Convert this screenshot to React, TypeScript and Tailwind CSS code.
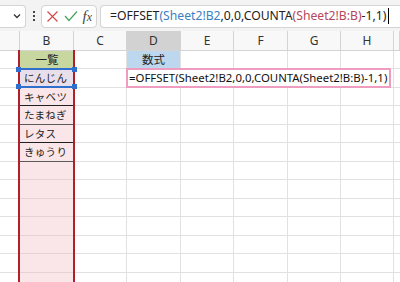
import React from 'react';

const jp = { fontFamily: '"Noto Sans CJK JP", "Noto Sans", sans-serif' };

const headers = [
  { k: '', w: 'w-[20px]' },
  { k: 'B', w: 'w-[54px]' },
  { k: 'C', w: 'w-[53px]' },
  { k: 'D', w: 'w-[54px]' },
  { k: 'E', w: 'w-[53px]' },
  { k: 'F', w: 'w-[54px]' },
  { k: 'G', w: 'w-[53px]' },
  { k: 'H', w: 'w-[53px]' },
  { k: '', w: 'flex-1' },
];

const items = ['', '一覧', 'にんじん', 'キャベツ', 'たまねぎ', 'レタス', 'きゅうり'];

const App: React.FC = () => {
  const rows = Array.from({ length: 13 }, (_, i) => i);

  return (
    <div className="relative w-[400px] h-[282px] overflow-hidden bg-white" style={jp}>
      {/* formula bar */}
      <div className="h-[31px] bg-[#f3f3f3] flex items-center pt-[1px]">
        <div className="w-[26px] h-[23px] bg-white border border-l-0 border-[#d4d4d4] rounded-r-[4px] flex items-center justify-end pr-[4px]">
          <svg width="8" height="6" viewBox="0 0 8 6">
            <path d="M1 1.5 L4 4.5 L7 1.5" fill="none" stroke="#333" strokeWidth="1.3" />
          </svg>
        </div>
        <div className="w-[15px] flex flex-col items-center gap-[2px]">
          <span className="w-[2px] h-[2px] bg-[#444]" />
          <span className="w-[2px] h-[2px] bg-[#444]" />
          <span className="w-[2px] h-[2px] bg-[#444]" />
        </div>
        <div className="w-[56px] h-[23px] bg-white border border-[#d4d4d4] rounded-[4px] flex items-center justify-between pl-[4px] pr-[4px]">
          <svg width="13" height="13" viewBox="0 0 13 13">
            <path d="M1.5 1.5 L11.5 11.5 M11.5 1.5 L1.5 11.5" stroke="#d24a4a" strokeWidth="1.2" />
          </svg>
          <svg width="14" height="12" viewBox="0 0 14 12">
            <path d="M1 6 L5 10.5 L13 1.5" fill="none" stroke="#45a35a" strokeWidth="1.2" />
          </svg>
          <span className="text-[15px] italic text-[#444] leading-none" style={{ fontFamily: '"Liberation Serif", serif' }}>
            f<span className="text-[12px]">x</span>
          </span>
        </div>
        <div className="ml-[3px] flex-1 h-[23px] bg-white border border-r-0 border-[#d4d4d4] rounded-l-[4px] flex items-center pl-[9px] text-[12.2px] text-[#222] whitespace-nowrap" style={{ fontFamily: '"Noto Sans", sans-serif' }}>
          <span>=OFFSET</span>
          <span className="text-[#3c7fc2]">(Sheet2!B2</span>
          <span>,0,0,COUNTA</span>
          <span className="text-[#b5475b]">(Sheet2!B:B)</span>
          <span>-1,1)</span>
          <span className="ml-[2px] w-[1px] h-[16px] bg-black" />
        </div>
      </div>

      {/* column headers */}
      <div className="flex h-[20px] bg-[#f8f8f8] border-b border-[#d4d4d4] text-[12px] text-[#333]" style={{ fontFamily: '"Noto Sans", sans-serif' }}>
        {headers.map((h, i) => (
          <div
            key={i}
            className={`${h.w} h-full flex items-center justify-center border-r border-[#d4d4d4] ${h.k === 'D' ? 'bg-[#d2d2d2]' : ''}`}
          >
            {h.k}
          </div>
        ))}
      </div>

      {/* grid */}
      {rows.map((r) => {
        const item = items[r + 1];
        let bBg = 'bg-[#fae6e8]';
        if (r === 0) bBg = 'bg-[#c8d6a0]';
        if (r === 1) bBg = 'bg-[#e8dfeb]';
        let bBorder = 'border-[#e6d2d4]';
        if (r >= 2 && r <= 5) bBorder = r % 2 === 0 ? 'border-[#202020]' : 'border-[#5a5a5a]';
        return (
          <div key={r} className={`flex ${r % 2 === 0 ? 'h-[18px]' : 'h-[19px]'} text-[12px] text-[#222]`}>
            <div className="w-[20px] border-r border-b border-[#e1e1e1]" />
            <div className={`w-[54px] border-b ${bBorder} ${bBg} flex items-center whitespace-nowrap ${r === 0 ? 'justify-center text-[11.5px]' : 'pl-[4px] text-[10.5px] tracking-[0.3px]'}`}>
              {item}
            </div>
            <div className="w-[53px] border-r border-b border-[#e1e1e1]" />
            <div className={`relative w-[54px] border-r border-b border-[#e1e1e1] ${r === 0 ? 'bg-[#bdd7ee] flex items-center justify-center text-[11.5px]' : ''}`}>
              {r === 0 && '数式'}
              {r === 1 && (
                <div className="absolute left-[-1px] top-[-1px] w-[265px] h-[20px] border-2 border-[#ee9cc0] bg-white flex items-center pl-[1px] whitespace-nowrap text-[11.4px] text-[#111]" style={{ fontFamily: '"Noto Sans", sans-serif' }}>
                  =OFFSET(Sheet2!B2,0,0,COUNTA(Sheet2!B:B)-1,1)
                </div>
              )}
            </div>
            <div className="w-[53px] border-r border-b border-[#e1e1e1]" />
            <div className="w-[54px] border-r border-b border-[#e1e1e1]" />
            <div className="w-[53px] border-r border-b border-[#e1e1e1]" />
            <div className="w-[53px] border-r border-b border-[#e1e1e1]" />
            <div className="flex-1 border-b border-[#e1e1e1]" />
          </div>
        );
      })}

      {/* column B selection outline */}
      <div className="absolute left-[18px] top-[50px] w-[57px] h-[240px] border-x-2 border-[#b0202c] pointer-events-none" />
      {/* B3 range highlight */}
      <div className="absolute left-[19px] top-[68px] w-[55px] h-[20px] border-y-2 border-[#2f6fce] pointer-events-none">
        <span className="absolute -left-[3px] -top-[3px] w-[5px] h-[5px] bg-[#2f6fce]" />
        <span className="absolute -right-[3px] -top-[3px] w-[5px] h-[5px] bg-[#2f6fce]" />
        <span className="absolute -left-[3px] -bottom-[3px] w-[5px] h-[5px] bg-[#2f6fce]" />
        <span className="absolute -right-[3px] -bottom-[3px] w-[5px] h-[5px] bg-[#2f6fce]" />
      </div>
    </div>
  );
};

export default App;
